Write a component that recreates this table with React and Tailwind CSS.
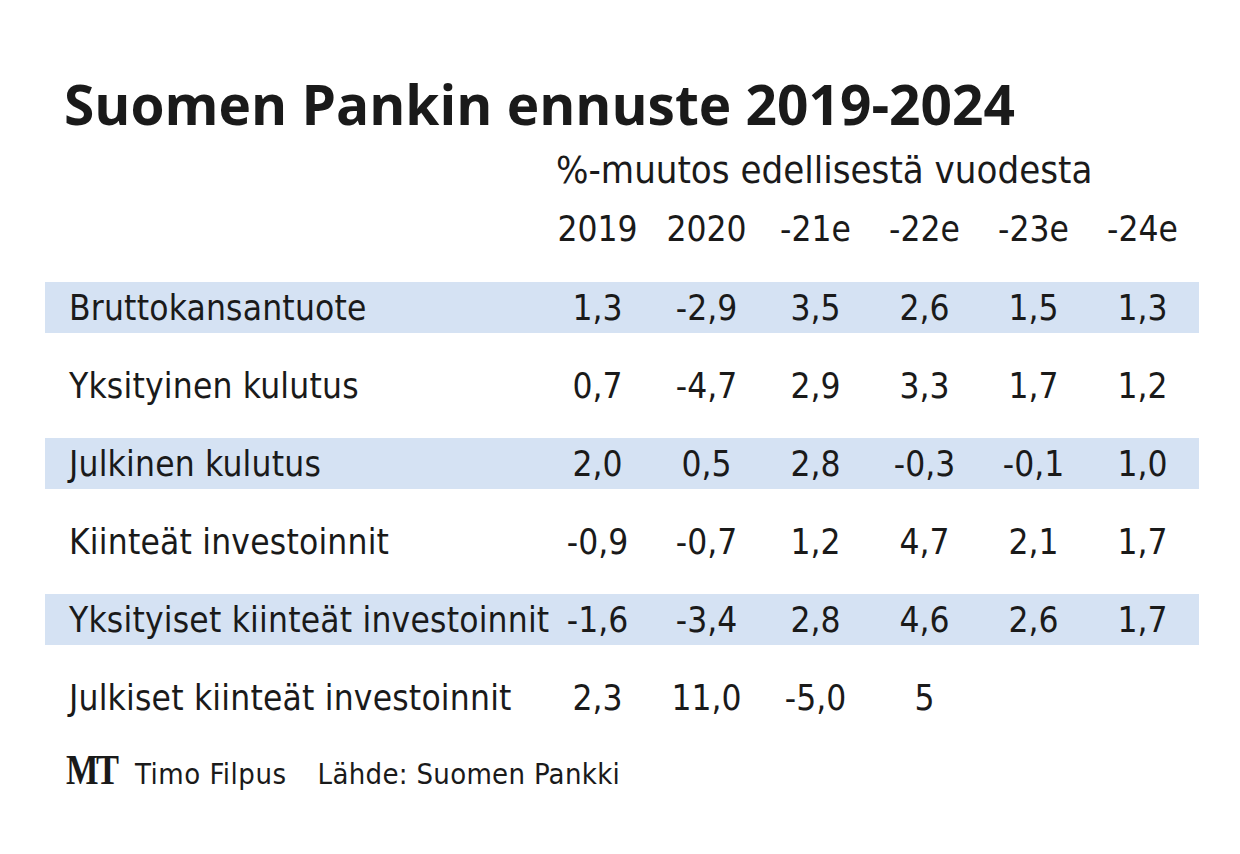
const rows = [
  { label: "Bruttokansantuote", values: ["1,3", "-2,9", "3,5", "2,6", "1,5", "1,3"], shaded: true },
  { label: "Yksityinen kulutus", values: ["0,7", "-4,7", "2,9", "3,3", "1,7", "1,2"] },
  { label: "Julkinen kulutus", values: ["2,0", "0,5", "2,8", "-0,3", "-0,1", "1,0"], shaded: true },
  { label: "Kiinteät investoinnit", values: ["-0,9", "-0,7", "1,2", "4,7", "2,1", "1,7"] },
  { label: "Yksityiset kiinteät investoinnit", values: ["-1,6", "-3,4", "2,8", "4,6", "2,6", "1,7"], shaded: true },
  { label: "Julkiset kiinteät investoinnit", values: ["2,3", "11,0", "-5,0", "5", "", ""] },
];

const years = ["2019", "2020", "-21e", "-22e", "-23e", "-24e"];

const cond = { fontFamily: '"DejaVu Sans Condensed", "Liberation Sans Narrow", sans-serif' };

export default function App() {
  return (
    <div className="w-[1240px] h-[854px] bg-white text-[#1a1a1a] overflow-hidden">
      {/* Title */}
      <h1
        className="pl-[64px] pt-[74px] text-[55px] leading-[60px] font-bold"
        style={{ fontFamily: '"Open Sans", sans-serif' }}
      >
        Suomen Pankin ennuste 2019-2024
      </h1>

      <div style={cond}>
        {/* Sub-heading */}
        <div className="pl-[556px] mt-[14px] text-[38px] leading-[44px]">
          %-muutos edellisestä vuodesta
        </div>

        {/* Year header */}
        <div className="ml-[45px] w-[1154px] grid grid-cols-[498px_repeat(6,109px)] mt-[15px] text-[35px] leading-[44px]">
          <div />
          {years.map((y) => (
            <div key={y} className="text-center">{y}</div>
          ))}
        </div>

        {/* Rows */}
        <div className="ml-[45px] w-[1154px] mt-[31px] flex flex-col gap-[27px]">
          {rows.map((r) => (
            <div
              key={r.label}
              className={`h-[51px] grid grid-cols-[498px_repeat(6,109px)] items-center text-[35px] ${
                r.shaded ? "bg-[#d5e2f3]" : ""
              }`}
            >
              <div className="pl-[24px] whitespace-nowrap tracking-[0.2px]">{r.label}</div>
              {r.values.map((v, i) => (
                <div key={i} className="text-center">{v}</div>
              ))}
            </div>
          ))}
        </div>

        {/* Footer */}
        <div className="ml-[66px] mt-[26px] flex items-baseline">
          <span
            className="text-[42px] font-bold leading-none tracking-[-3px] inline-block scale-x-[0.82] origin-left w-[69px]"
            style={{ fontFamily: '"Liberation Serif", serif' }}
          >
            MT
          </span>
          <span className="text-[29px] font-light tracking-[0.5px]">Timo Filpus</span>
          <span className="ml-[31px] text-[29px] font-light tracking-[0.3px]">Lähde: Suomen Pankki</span>
        </div>
      </div>
    </div>
  );
}
